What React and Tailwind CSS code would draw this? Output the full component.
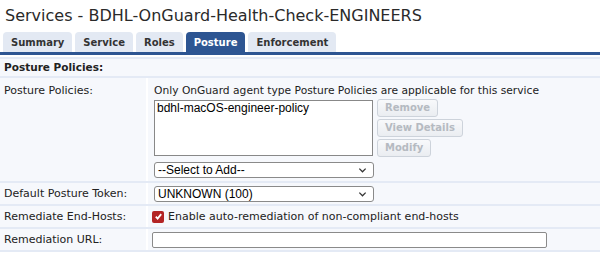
import React from 'react';

const tabs = ['Summary', 'Service', 'Roles', 'Posture', 'Enforcement'];

const Label = ({ children }) => (
  <div className="w-[148px] shrink-0 self-stretch border-r-2 border-white px-[4px] text-[#222]">{children}</div>
);

const GhostButton = ({ children }) => (
  <button className="h-[18px] rounded-[3px] border border-[#cdd3db] bg-gradient-to-b from-[#f8f9fb] to-[#eaedf1] px-[7px] text-[10px] font-bold leading-none text-[#b5bac1]">
    {children}
  </button>
);

const Chevron = () => (
  <svg className="h-[8px] w-[9px]" viewBox="0 0 10 8" fill="none" stroke="#333" strokeWidth="1.4">
    <path d="M1.5 2.5l3.5 3.5 3.5-3.5" />
  </svg>
);

const Select = ({ value }) => (
  <div className="flex h-[16px] w-[220px] items-center justify-between rounded-[3px] border border-[#8a8a8a] bg-white pl-[3px] pr-[6px] font-['Liberation_Sans',Arial,sans-serif] text-[12px] leading-none text-black">
    <span>{value}</span>
    <Chevron />
  </div>
);

export default function App() {
  return (
    <div className="h-[266px] w-[600px] overflow-hidden bg-white font-['DejaVu_Sans',Verdana,sans-serif] text-[11px] leading-[13px]">
      {/* Title */}
      <h1 className="pl-[5px] pt-[5px] text-[16px] leading-[22px] text-[#2a2a2a]">
        Services - BDHL-OnGuard-Health-Check-ENGINEERS
      </h1>

      {/* Tabs */}
      <div className="mt-[5px] flex gap-[3px] border-b-[3px] border-[#2d5592] pl-[3px]">
        {tabs.map((t) => (
          <div
            key={t}
            className={
              t === 'Posture'
                ? 'flex h-[20px] items-center rounded-t-[4px] bg-[#2d5592] px-[8px] text-[10px] font-bold text-white'
                : 'flex h-[20px] items-center rounded-t-[4px] bg-[#e3e9f3] px-[8px] text-[10px] font-bold text-[#333]'
            }
          >
            {t}
          </div>
        ))}
      </div>

      {/* Section */}
      <div className="mt-[2px] border-t-2 border-[#e4eaf5]">
        <div className="flex h-[19px] items-center border-b-2 border-[#e4eaf5] bg-[#f6f8fc] px-[4px] text-[10.5px] font-bold text-[#222]">
          Posture Policies:
        </div>

        {/* Posture Policies row */}
        <div className="flex border-b-2 border-[#e4eaf5] bg-[#f6f8fc]">
          <Label>
            <div className="pt-[6px]">Posture Policies:</div>
          </Label>
          <div className="flex-1 pb-[3px] pl-[6px] pt-[6px]">
            <div className="text-[10.7px] text-[#222]">Only OnGuard agent type Posture Policies are applicable for this service</div>
            <div className="mt-[3px] flex gap-[4px]">
              <div className="h-[56px] w-[219px] border border-[#888] bg-white px-[2px] pt-[1px] font-['Liberation_Sans',Arial,sans-serif] text-[12px] leading-[13px] text-black">
                bdhl-macOS-engineer-policy
              </div>
              <div className="-mt-[1px] flex flex-col items-start gap-[2px]">
                <GhostButton>Remove</GhostButton>
                <GhostButton>View Details</GhostButton>
                <GhostButton>Modify</GhostButton>
              </div>
            </div>
            <div className="mt-[5px]">
              <Select value="--Select to Add--" />
            </div>
          </div>
        </div>

        {/* Default Posture Token */}
        <div className="flex h-[23px] items-center border-b-2 border-[#e4eaf5] bg-[#f6f8fc]">
          <Label><div className="flex h-full items-center">Default Posture Token:</div></Label>
          <div className="pl-[6px]">
            <Select value="UNKNOWN (100)" />
          </div>
        </div>

        {/* Remediate End-Hosts */}
        <div className="flex h-[23px] items-center border-b-2 border-[#e4eaf5] bg-[#f6f8fc]">
          <Label><div className="flex h-full items-center">Remediate End-Hosts:</div></Label>
          <div className="flex items-center gap-[4px] pl-[4px] text-[#222]">
            <span className="flex h-[12px] w-[12px] items-center justify-center rounded-[2px] bg-[#b32424]">
              <svg className="h-[9px] w-[9px]" viewBox="0 0 10 10" fill="none" stroke="white" strokeWidth="2">
                <path d="M2 5.2l2 2.2 4-5" />
              </svg>
            </span>
            Enable auto-remediation of non-compliant end-hosts
          </div>
        </div>

        {/* Remediation URL */}
        <div className="flex h-[23px] items-center border-b-2 border-[#e4eaf5] bg-[#f6f8fc]">
          <Label><div className="flex h-full items-center">Remediation URL:</div></Label>
          <div className="pl-[4px]">
            <div className="h-[16px] w-[395px] rounded-[2px] border border-[#8a8a8a] bg-white" />
          </div>
        </div>
      </div>
    </div>
  );
}
